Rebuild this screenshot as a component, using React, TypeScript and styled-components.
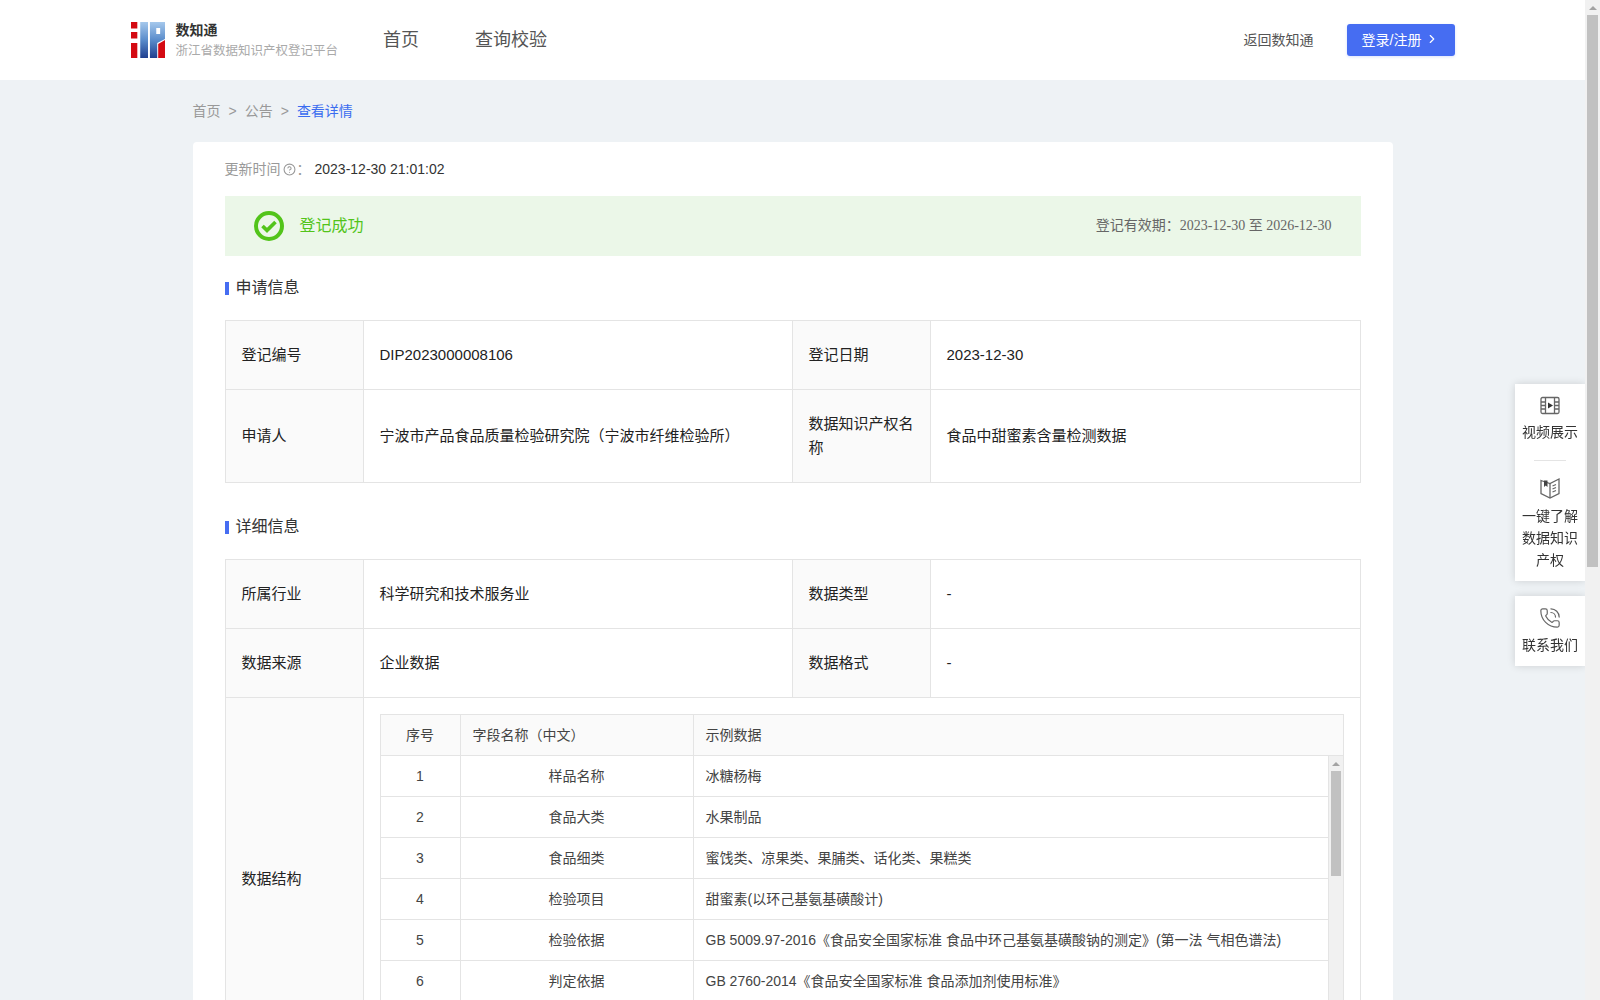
import React from 'react'
import styled, { createGlobalStyle } from 'styled-components'
import { ChevronRight, CircleHelp, PhoneCall } from 'lucide-react'

const SANS = '"Liberation Sans", "Noto Sans CJK SC", sans-serif'
const SERIF = '"Liberation Serif", "Noto Sans CJK SC", serif'

const GlobalStyle = createGlobalStyle`
  body {
    margin: 0 15px 0 0;
    background: #eef2f5;
    font-family: ${SANS};
    color: #333;
  }
`

const Header = styled.header`
  height: 80px;
  background: #fff;
`

const HeaderInner = styled.div`
  width: 1324px;
  height: 100%;
  margin: 0 auto;
  display: flex;
  align-items: center;
`

const Brand = styled.div`
  display: flex;
  align-items: center;
  gap: 11px;
`

const BrandText = styled.div`
  display: flex;
  flex-direction: column;
  gap: 1px;
`

const BrandName = styled.div`
  font-size: 14px;
  line-height: 20px;
  font-weight: 700;
  color: #333;
`

const BrandSub = styled.div`
  font-size: 12.5px;
  line-height: 20px;
  color: #aaa;
`

const Nav = styled.nav`
  display: flex;
  gap: 56px;
  margin-left: 45px;
`

const NavLink = styled.a`
  font-size: 18px;
  line-height: 24px;
  color: #555;
`

const HeaderRight = styled.div`
  margin-left: auto;
  display: flex;
  align-items: center;
  gap: 33px;
`

const BackLink = styled.a`
  font-size: 14px;
  color: #555;
  margin-bottom: 3px;
`

const LoginButton = styled.button`
  width: 108px;
  height: 32px;
  padding: 0 0 3px;
  border: 0;
  border-radius: 3px;
  background: #466df2;
  box-shadow: 0 1px 3px rgba(70, 109, 242, 0.2);
  color: #fff;
  font-family: ${SANS};
  font-size: 14px;
  display: flex;
  align-items: center;
  justify-content: center;
  gap: 4px;
`

const Main = styled.main`
  width: 1200px;
  margin: 0 auto;
  padding-bottom: 20px;
`

const Breadcrumb = styled.div`
  display: flex;
  gap: 8px;
  padding: 20px 0 20px;
  font-size: 14px;
  line-height: 22px;
  color: #999;
`

const Crumb = styled.span<{ $current?: boolean }>`
  color: ${({ $current }) => ($current ? '#3a6cf0' : '#999')};
`

const Card = styled.div`
  min-height: 1595px;
  box-sizing: border-box;
  padding: 17px 32px 32px;
  background: #fff;
  border-radius: 4px;
`

const UpdateRow = styled.div`
  display: flex;
  align-items: center;
  font-size: 14px;
  line-height: 20px;
  color: #999;

  svg {
    margin: 0 1px 0 2px;
  }
`

const UpdateTime = styled.span`
  margin-left: 4px;
  color: #333;
`

const SuccessBar = styled.div`
  height: 60px;
  margin-top: 17px;
  padding: 0 29px;
  display: flex;
  align-items: center;
  background: #ebf7e8;
`

const SuccessText = styled.span`
  margin: 0 0 4px 16px;
  font-size: 16px;
  color: #52c41a;
`

const Validity = styled.span`
  margin: 0 0 4px auto;
  font-family: ${SERIF};
  font-size: 14px;
  color: #666;
`

const SectionTitle = styled.h3<{ $top: number }>`
  margin: ${({ $top }) => $top}px 0 21px;
  padding-top: 1px;
  display: flex;
  align-items: center;
  font-size: 16px;
  line-height: 22px;
  font-weight: 400;
  color: #333;

  &::before {
    content: '';
    width: 4px;
    height: 13px;
    margin: 1px 7px 0 0;
    background: #466df2;
  }
`

const InfoTable = styled.table`
  width: 1135px;
  table-layout: fixed;
  border-collapse: collapse;
  font-size: 15px;
  line-height: 24px;
`

const LabelCell = styled.th`
  padding: 22px 16px;
  border: 1px solid #e4e4e4;
  background: #fafafa;
  font-weight: 400;
  text-align: left;
  color: #222;
`

const ValueCell = styled.td<{ $flush?: boolean }>`
  padding: ${({ $flush }) => ($flush ? '16px' : '22px 16px')};
  border: 1px solid #e4e4e4;
  color: #222;
`

const FieldTable = styled.div`
  border: 1px solid #e4e4e4;
  border-bottom: 0;
  font-size: 14px;
  color: #444;
`

const FieldHead = styled.div`
  display: grid;
  grid-template-columns: 79px 233px 1fr;
  height: 40px;
  background: #fafafa;
  border-bottom: 1px solid #e4e4e4;
`

const FieldBody = styled.div`
  display: flex;
  height: 287px;
`

const FieldRows = styled.div`
  flex: 1;
  overflow: hidden;
`

const FieldRow = styled.div`
  display: grid;
  grid-template-columns: 79px 233px 1fr;
  height: 40px;
  border-bottom: 1px solid #e4e4e4;
`

const FieldCell = styled.div<{ $align?: string; $divider?: boolean }>`
  display: flex;
  align-items: center;
  justify-content: ${({ $align }) => $align || 'flex-start'};
  padding: 0 12px;
  border-left: ${({ $divider }) => ($divider ? '1px solid #e4e4e4' : '0')};
`

// the browser that takes the picture hides native scrollbars, so they are drawn
const Scrollbar = styled.div`
  flex: none;
  box-sizing: border-box;
  width: 15px;
  background: #f1f1f1;
  display: flex;
  flex-direction: column;
`

const FieldScrollbar = styled(Scrollbar)`
  border-left: 1px solid #e4e4e4;
`

const PageScrollbar = styled(Scrollbar)`
  position: fixed;
  top: 0;
  right: 0;
  bottom: 0;
`

const ScrollArrow = styled.div`
  flex: none;
  height: 15px;
  display: flex;
  align-items: center;
  justify-content: center;

  &::before {
    content: '';
    border-left: 4px solid transparent;
    border-right: 4px solid transparent;
    border-bottom: 4px solid #a3a3a3;
  }
`

const ScrollThumb = styled.div<{ $height: number }>`
  flex: none;
  height: ${({ $height }) => $height}px;
  margin: 0 2px;
  background: #c1c1c1;
`

const SidePanel = styled.aside<{ $top: number }>`
  position: fixed;
  top: ${({ $top }) => $top}px;
  right: 15px;
  width: 70px;
  background: #fff;
  box-shadow: 0 0 8px rgba(0, 0, 0, 0.14);
`

const SideItem = styled.div<{ $gap: number }>`
  padding: 11px 0 10px;
  display: flex;
  flex-direction: column;
  align-items: center;
  gap: ${({ $gap }) => $gap}px;
  font-size: 14px;
  line-height: 22px;
  color: #333;
  text-align: center;
`

const SideIcon = styled.svg`
  display: block;
  width: 22px;
  height: 22px;
  fill: none;
  stroke: #666;
  stroke-width: 1.3;
`

const PhoneIcon = styled(PhoneCall)`
  display: block;
  width: 22px;
  height: 22px;
  stroke: #666;
  stroke-width: 1.3;
`

const SideDivider = styled.div`
  width: 32px;
  height: 1px;
  margin: 7px auto 5px;
  background: #e4e4e4;
`

const Logo = () => (
  <svg width="34" height="36" viewBox="0 0 35 36" preserveAspectRatio="none">
    <defs>
      <linearGradient id="logoBlue" x1="0" y1="0" x2="0" y2="1">
        <stop offset="0" stopColor="#a5c8ec" />
        <stop offset="0.5" stopColor="#5a8ccb" />
        <stop offset="1" stopColor="#1f3f8f" />
      </linearGradient>
    </defs>
    <rect x="0" y="0" width="6.5" height="6.5" fill="#d40a12" />
    <rect x="0" y="10" width="6.5" height="6.5" fill="#d40a12" />
    <rect x="0" y="21" width="6.5" height="15" fill="#d40a12" />
    <rect x="9.5" y="0" width="8" height="36" fill="url(#logoBlue)" />
    <path d="M19.5 0H35V17L27 21V36H19.5Z M26 6V12H30V6Z" fillRule="evenodd" fill="url(#logoBlue)" />
    <path d="M28 22L35 18V36H28Z" fill="#d40a12" />
  </svg>
)

const CheckBadge = () => (
  <svg width="30" height="30" viewBox="0 0 30 30" fill="none">
    <circle cx="15" cy="15" r="13" stroke="#52c41a" strokeWidth="4" />
    <path d="M8.5 15L13 19.4L21.5 11" stroke="#52c41a" strokeWidth="3.6" />
  </svg>
)

const FIELDS = [
  ['1', '样品名称', '冰糖杨梅'],
  ['2', '食品大类', '水果制品'],
  ['3', '食品细类', '蜜饯类、凉果类、果脯类、话化类、果糕类'],
  ['4', '检验项目', '甜蜜素(以环己基氨基磺酸计)'],
  ['5', '检验依据', 'GB 5009.97-2016《食品安全国家标准 食品中环己基氨基磺酸钠的测定》(第一法 气相色谱法)'],
  ['6', '判定依据', 'GB 2760-2014《食品安全国家标准 食品添加剂使用标准》']
]

const Cols = () => (
  <colgroup>
    <col width="138" />
    <col width="429" />
    <col width="138" />
    <col width="430" />
  </colgroup>
)

export default function App() {
  return (
    <>
      <GlobalStyle />
      <Header>
        <HeaderInner>
          <Brand>
            <Logo />
            <BrandText>
              <BrandName>数知通</BrandName>
              <BrandSub>浙江省数据知识产权登记平台</BrandSub>
            </BrandText>
          </Brand>
          <Nav>
            <NavLink>首页</NavLink>
            <NavLink>查询校验</NavLink>
          </Nav>
          <HeaderRight>
            <BackLink>返回数知通</BackLink>
            <LoginButton>
              登录/注册 <ChevronRight size={14} />
            </LoginButton>
          </HeaderRight>
        </HeaderInner>
      </Header>

      <Main>
        <Breadcrumb>
          <Crumb>首页</Crumb>
          <Crumb>&gt;</Crumb>
          <Crumb>公告</Crumb>
          <Crumb>&gt;</Crumb>
          <Crumb $current>查看详情</Crumb>
        </Breadcrumb>

        <Card>
          <UpdateRow>
            更新时间
            <CircleHelp size={13} />：<UpdateTime>2023-12-30 21:01:02</UpdateTime>
          </UpdateRow>

          <SuccessBar>
            <CheckBadge />
            <SuccessText>登记成功</SuccessText>
            <Validity>登记有效期：2023-12-30 至 2026-12-30</Validity>
          </SuccessBar>

          <SectionTitle $top={20}>申请信息</SectionTitle>
          <InfoTable>
            <Cols />
            <tbody>
              <tr>
                <LabelCell>登记编号</LabelCell>
                <ValueCell>DIP2023000008106</ValueCell>
                <LabelCell>登记日期</LabelCell>
                <ValueCell>2023-12-30</ValueCell>
              </tr>
              <tr>
                <LabelCell>申请人</LabelCell>
                <ValueCell>宁波市产品食品质量检验研究院（宁波市纤维检验所）</ValueCell>
                <LabelCell>数据知识产权名称</LabelCell>
                <ValueCell>食品中甜蜜素含量检测数据</ValueCell>
              </tr>
            </tbody>
          </InfoTable>

          <SectionTitle $top={32}>详细信息</SectionTitle>
          <InfoTable>
            <Cols />
            <tbody>
              <tr>
                <LabelCell>所属行业</LabelCell>
                <ValueCell>科学研究和技术服务业</ValueCell>
                <LabelCell>数据类型</LabelCell>
                <ValueCell>-</ValueCell>
              </tr>
              <tr>
                <LabelCell>数据来源</LabelCell>
                <ValueCell>企业数据</ValueCell>
                <LabelCell>数据格式</LabelCell>
                <ValueCell>-</ValueCell>
              </tr>
              <tr>
                <LabelCell>数据结构</LabelCell>
                <ValueCell $flush colSpan={3}>
                  <FieldTable>
                    <FieldHead>
                      <FieldCell $align="center">序号</FieldCell>
                      <FieldCell $divider>字段名称（中文）</FieldCell>
                      <FieldCell $divider>示例数据</FieldCell>
                    </FieldHead>
                    <FieldBody>
                      <FieldRows>
                        {FIELDS.map(([no, name, sample]) => (
                          <FieldRow key={no}>
                            <FieldCell $align="center">{no}</FieldCell>
                            <FieldCell $divider $align="center">{name}</FieldCell>
                            <FieldCell $divider>{sample}</FieldCell>
                          </FieldRow>
                        ))}
                      </FieldRows>
                      <FieldScrollbar>
                        <ScrollArrow />
                        <ScrollThumb $height={105} />
                      </FieldScrollbar>
                    </FieldBody>
                  </FieldTable>
                </ValueCell>
              </tr>
            </tbody>
          </InfoTable>
        </Card>
      </Main>

      <SidePanel $top={384}>
        <SideItem $gap={4}>
          <SideIcon viewBox="0 0 22 22">
            <rect x="2" y="2.5" width="18" height="16" rx="1.5" />
            <path d="M6.5 2.5V18.5M15.5 2.5V18.5M2 7H6.5M2 10.5H6.5M2 14H6.5M15.5 7H20M15.5 10.5H20M15.5 14H20" />
            <path d="M9 7.5L14 10.5L9 13.5Z" fill="#333" stroke="none" />
          </SideIcon>
          视频展示
        </SideItem>
        <SideDivider />
        <SideItem $gap={6}>
          <SideIcon viewBox="0 0 22 22">
            <path d="M2 3.5L11 6.5L20 2V16.5L11 21L2 16.5Z" />
            <path d="M11 6.5V21M13.5 9L17 7.5M13.5 12L17 10.5M13.5 15L17 13.5" />
            <path d="M5 3.5H8.5V10L6.7 8.5L5 10Z" fill="#444" stroke="none" />
          </SideIcon>
          <div>
            一键了解
            <br />
            数据知识
            <br />
            产权
          </div>
        </SideItem>
      </SidePanel>

      <SidePanel $top={596}>
        <SideItem $gap={5}>
          <PhoneIcon />
          联系我们
        </SideItem>
      </SidePanel>

      <PageScrollbar>
        <ScrollArrow />
        <ScrollThumb $height={552} />
      </PageScrollbar>
    </>
  )
}
